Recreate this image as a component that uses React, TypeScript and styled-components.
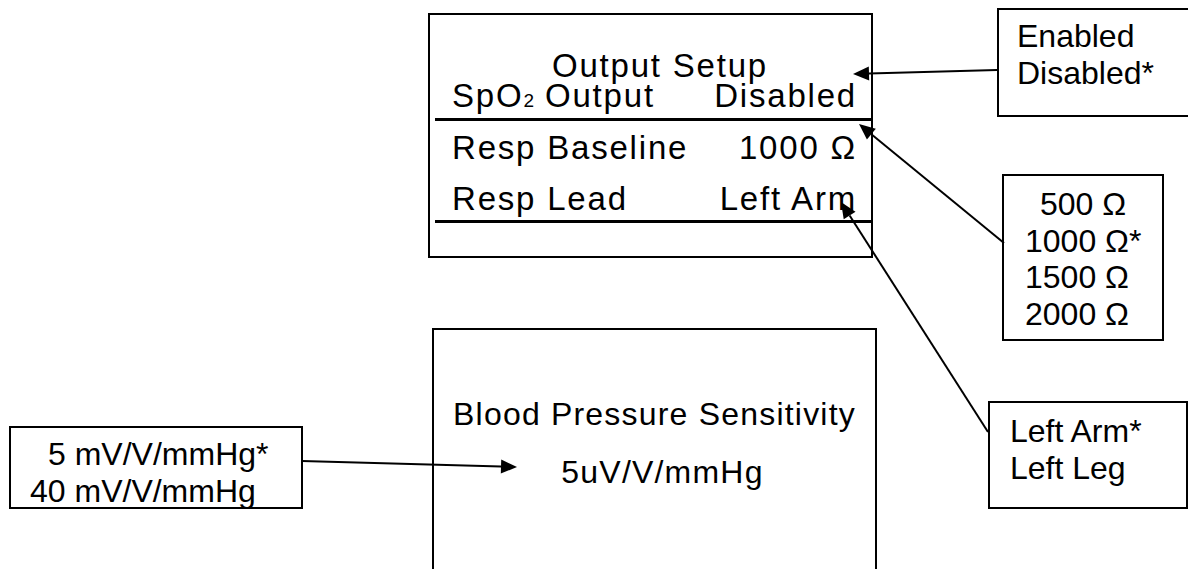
import React from "react";
import styled, { createGlobalStyle } from "styled-components";

const GlobalStyle = createGlobalStyle`
    html, body {
        margin: 0;
        padding: 0;
        background: #ffffff;
    }
    body {
        font-family: "Liberation Sans", Arial, sans-serif;
        color: #000000;
    }
`;

// the whole sheet is a diagram canvas: nodes sit where the drawing put them
const Canvas = styled.div`
    position: relative;
    width: 1188px;
    height: 569px;
    overflow: hidden;
    background: #ffffff;
`;

const Node = styled.div<{ $x: number; $y: number; $w: number; $h: number }>`
    position: absolute;
    left: ${(p) => p.$x}px;
    top: ${(p) => p.$y}px;
    width: ${(p) => p.$w}px;
    height: ${(p) => p.$h}px;
    box-sizing: border-box;
    border: 2px solid #000;
    background: #fff;
`;

// LCD screen mock-ups
const Screen = styled(Node)`
    display: flex;
    flex-direction: column;
    font-size: 33px;
    letter-spacing: 1.8px;
    line-height: 30px;
`;

const ScreenTitle = styled.div<{ $top: number; $shift?: number }>`
    margin-top: ${(p) => p.$top}px;
    padding-left: ${(p) => p.$shift ?? 0}px;
    text-align: center;
    white-space: nowrap;
`;

const ScreenRow = styled.div<{ $top?: number }>`
    display: flex;
    justify-content: space-between;
    margin-top: ${(p) => p.$top ?? 0}px;
    padding: 0 14px 0 22px;
    white-space: nowrap;
`;

const Sub = styled.span`
    font-size: 19px;
    letter-spacing: 0;
`;

const Divider = styled.div<{ $top: number }>`
    height: 3px;
    margin: ${(p) => p.$top}px 0 0 5px;
    background: #000;
`;

const SensScreen = styled(Screen)`
    font-size: 32px;
    letter-spacing: 1.2px;
`;

// option callouts
const Callout = styled(Node)<{ $padTop: number; $padLeft: number }>`
    padding: ${(p) => p.$padTop}px 0 0 ${(p) => p.$padLeft}px;
    font-size: 32px;
    line-height: 36.5px;
`;

const Option = styled.div<{ $indent?: number }>`
    padding-left: ${(p) => p.$indent ?? 0}px;
    white-space: nowrap;
`;

const Overlay = styled.svg`
    position: absolute;
    left: 0;
    top: 0;
    pointer-events: none;
`;

type ArrowProps = { x1: number; y1: number; x2: number; y2: number };

const Arrow = ({ x1, y1, x2, y2 }: ArrowProps) => {
    const a = Math.atan2(y2 - y1, x2 - x1);
    const len = 16;
    const hw = 7;
    const bx = x2 - len * Math.cos(a);
    const by = y2 - len * Math.sin(a);
    const px = -Math.sin(a) * hw;
    const py = Math.cos(a) * hw;
    return (
        <g>
            <line x1={x1} y1={y1} x2={bx} y2={by} stroke="#000" strokeWidth={2} />
            <polygon points={`${x2},${y2} ${bx + px},${by + py} ${bx - px},${by - py}`} fill="#000" />
        </g>
    );
};

export default function App() {
    return (
        <>
            <GlobalStyle />
            <Canvas>
                <Screen $x={428} $y={13} $w={445} $h={245}>
                    <ScreenTitle $top={36} $shift={19}>Output Setup</ScreenTitle>
                    <ScreenRow>
                        <span>SpO<Sub>2</Sub> Output</span>
                        <span>Disabled</span>
                    </ScreenRow>
                    <Divider $top={2} />
                    <ScreenRow $top={12}>
                        <span>Resp Baseline</span>
                        <span>1000 Ω</span>
                    </ScreenRow>
                    <ScreenRow $top={21}>
                        <span>Resp Lead</span>
                        <span>Left Arm</span>
                    </ScreenRow>
                    <Divider $top={6} />
                </Screen>

                <SensScreen $x={432} $y={328} $w={445} $h={300}>
                    <ScreenTitle $top={69}>Blood Pressure Sensitivity</ScreenTitle>
                    <ScreenTitle $top={28} $shift={16}>5uV/V/mmHg</ScreenTitle>
                </SensScreen>

                <Callout $x={997} $y={8} $w={195} $h={109} $padTop={8} $padLeft={18}>
                    <Option>Enabled</Option>
                    <Option>Disabled*</Option>
                </Callout>

                <Callout $x={1002} $y={174} $w={162} $h={167} $padTop={10} $padLeft={21}>
                    <Option $indent={15}>500 Ω</Option>
                    <Option>1000 Ω*</Option>
                    <Option>1500 Ω</Option>
                    <Option>2000 Ω</Option>
                </Callout>

                <Callout $x={988} $y={401} $w={200} $h={108} $padTop={10} $padLeft={20}>
                    <Option>Left Arm*</Option>
                    <Option>Left Leg</Option>
                </Callout>

                <Callout $x={9} $y={426} $w={294} $h={83} $padTop={8} $padLeft={19}>
                    <Option $indent={18}>5 mV/V/mmHg*</Option>
                    <Option>40 mV/V/mmHg</Option>
                </Callout>

                <Overlay width={1188} height={569} viewBox="0 0 1188 569">
                    <Arrow x1={997} y1={70} x2={853} y2={74} />
                    <Arrow x1={1004} y1={243} x2={859} y2={124} />
                    <Arrow x1={988} y1={432} x2={841} y2={202} />
                    <Arrow x1={302} y1={461} x2={517} y2={467} />
                </Overlay>
            </Canvas>
        </>
    );
}
